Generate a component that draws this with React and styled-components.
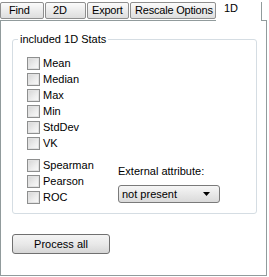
import React from "react";
import styled, { createGlobalStyle } from "styled-components";

const GlobalStyle = createGlobalStyle`
  body {
    margin: 0;
    background: #fff;
    font-family: "Liberation Sans", Arial, sans-serif;
    font-size: 11px;
    color: #000;
  }
`;

const Window = styled.div`
  width: 267px;
  display: flex;
  flex-direction: column;
`;

const TabStrip = styled.div`
  display: flex;
  align-items: flex-start;
  height: 20px;
  border-bottom: 1px solid #919b9c;
`;

const Tab = styled.div`
  box-sizing: border-box;
  width: ${(p) => p.$width}px;
  margin-left: ${(p) => p.$gap || 0}px;
  padding-left: ${(p) => p.$pad}px;
  line-height: 13px;
  white-space: nowrap;
  letter-spacing: -0.2px;
  ${(p) =>
    p.$active
      ? `
    margin-top: 2px;
    height: 19px;
    margin-bottom: -1px;
    background: #fff;
    border-right: 1px solid #919b9c;
  `
      : `
    margin-top: 2px;
    height: 17px;
    padding-top: 1px;
    border: 1px solid #8f8f8f;
    border-radius: 2px;
    background: linear-gradient(#fbfbfb, #ececec 50%, #dedede);
  `}
`;

const Panel = styled.div`
  box-sizing: border-box;
  height: 255px;
  border: 1px solid #919b9c;
  border-top: none;
  display: flex;
  flex-direction: column;
`;

const GroupBox = styled.div`
  box-sizing: border-box;
  margin: 18px 9px 0 11px;
  height: 175px;
  border: 1px solid #d5dde3;
  border-radius: 3px;
`;

const Legend = styled.div`
  width: fit-content;
  margin: -7px 0 0 5px;
  padding: 0 2px;
  line-height: 13px;
  background: #fff;
`;

const List = styled.div`
  padding-left: 14px;
  margin-top: ${(p) => p.$top}px;
`;

const Row = styled.label`
  display: flex;
  align-items: flex-start;
  height: 16px;
`;

const Box = styled.span`
  box-sizing: border-box;
  width: 13px;
  height: 13px;
  margin-top: 1px;
  margin-right: 3px;
  border: 1px solid #8e8f8f;
  background: linear-gradient(135deg, #d4d4d4, #eeeeee 60%, #fafafa);
  box-shadow: inset 0 0 0 1px #e2e2e2;
`;

const RowText = styled.span`
  line-height: 14px;
`;

const Bottom = styled.div`
  display: flex;
  margin-top: 6px;
`;

const LeftCol = styled.div`
  width: 91px;
  padding-left: 14px;
`;

const RightCol = styled.div`
  display: flex;
  flex-direction: column;
  padding-top: 7px;
`;

const FieldLabel = styled.div`
  line-height: 13px;
`;

const Select = styled.div`
  box-sizing: border-box;
  margin-top: 7px;
  width: 102px;
  height: 18px;
  display: flex;
  align-items: center;
  justify-content: space-between;
  padding: 0 9px 0 3px;
  border: 1px solid #7a7a7a;
  border-radius: 3px;
  background: linear-gradient(#f6f6f6, #e8e8e8 50%, #dadada);
`;

const Button = styled.button`
  box-sizing: border-box;
  margin: 20px 0 0 11px;
  width: 98px;
  height: 20px;
  padding: 0;
  font: inherit;
  color: #000;
  border: 1px solid #707070;
  border-radius: 3px;
  background: linear-gradient(#f4f4f4, #e9e9e9 50%, #d6d6d6);
`;

const Check = ({ label }) => (
  <Row>
    <Box />
    <RowText>{label}</RowText>
  </Row>
);

const tabs = [
  { label: "Find", width: 44, pad: 8 },
  { label: "2D", width: 41, gap: 1, pad: 7 },
  { label: "Export", width: 42, gap: 1, pad: 4 },
  { label: "Rescale Options", width: 86, gap: 1, pad: 4 },
  { label: "1D", width: 46, pad: 8, active: true },
];

export default function App() {
  return (
    <>
      <GlobalStyle />
      <Window>
        <TabStrip>
          {tabs.map((t) => (
            <Tab
              key={t.label}
              $width={t.width}
              $gap={t.gap}
              $pad={t.pad}
              $active={t.active}
            >
              {t.label}
            </Tab>
          ))}
        </TabStrip>
        <Panel>
          <GroupBox>
            <Legend>included 1D Stats</Legend>
            <List $top={10}>
              {["Mean", "Median", "Max", "Min", "StdDev", "VK"].map((s) => (
                <Check key={s} label={s} />
              ))}
            </List>
            <Bottom>
              <LeftCol>
                <Check label="Spearman" />
                <Check label="Pearson" />
                <Check label="ROC" />
              </LeftCol>
              <RightCol>
                <FieldLabel>External attribute:</FieldLabel>
                <Select>
                  <span>not present</span>
                  <svg width="7" height="4" viewBox="0 0 7 4">
                    <polygon points="0,0 7,0 3.5,4" fill="#000" />
                  </svg>
                </Select>
              </RightCol>
            </Bottom>
          </GroupBox>
          <Button>Process all</Button>
        </Panel>
      </Window>
    </>
  );
}
